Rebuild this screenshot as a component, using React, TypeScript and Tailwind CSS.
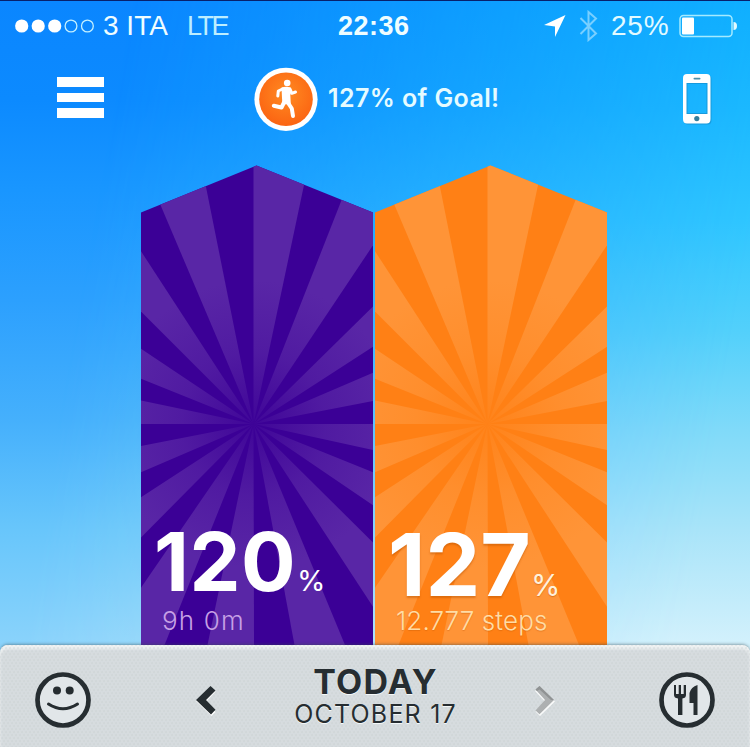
import type { ReactNode } from 'react'

interface BarProps {
  id: string
  base: string
  ray: string
  children: ReactNode
}

// Each row is the two outer points of a light ray, relative to the centre of the burst
const RAYS = [
  [0, -258, 50.5, -239],
  [88.5, -225, 119, -178],
  [119, -117, 119, -77],
  [119, -51, 119, -23],
  [119, 0, 119, 26],
  [119, 48, 119, 81],
  [119, 118, 119, 182],
  [91.5, 221, 41, 221],
  [0.5, 221, -46, 221],
  [-89, 221, -112, 163],
  [-112, 113, -112, 73],
  [-112, 48, -112, 22],
  [-112, 0, -112, -23.5],
  [-112, -45, -112, -75],
  [-112, -112, -112, -172],
  [-93, -219, -47.5, -237],
]

function SunburstBar({ id, base, ray, children }: BarProps) {
  return (
    <section className="relative h-[480px] w-[232px]">
      <svg className="absolute inset-0" width="232" height="480" viewBox="0 0 232 480">
        <defs>
          <clipPath id={`${id}-clip`}>
            <path d="M0 47.5L115.5 0.5L232 47.5V480H0Z" />
          </clipPath>
          <radialGradient id={`${id}-fade`} gradientUnits="userSpaceOnUse" cx="112.5" cy="259" r="240">
            <stop offset="0" stopColor={ray} stopOpacity="0.15" />
            <stop offset="0.3" stopColor={ray} stopOpacity="0.7" />
            <stop offset="0.6" stopColor={ray} />
          </radialGradient>
        </defs>
        <g clipPath={`url(#${id}-clip)`}>
          <rect width="232" height="480" fill={base} />
          {RAYS.map(([x1, y1, x2, y2], i) => (
            <path
              key={i}
              fill={`url(#${id}-fade)`}
              d={`M112.5 259L${112.5 + x1 * 2} ${259 + y1 * 2}L${112.5 + x2 * 2} ${259 + y2 * 2}Z`}
            />
          ))}
        </g>
      </svg>
      <div className="relative">{children}</div>
    </section>
  )
}

function StatusBar() {
  return (
    <div className="flex h-[50px] items-center border-t border-[#07206b] pt-px pl-[15px] text-[28px] leading-none">
      <svg width="80" height="14" viewBox="0 0 80 14" fill="#fff">
        <circle cx="6.7" cy="7" r="6.6" />
        <circle cx="23.2" cy="7" r="6.6" />
        <circle cx="39.7" cy="7" r="6.6" />
        <circle cx="56" cy="7" r="5.9" fill="none" stroke="#c4f0ff" strokeWidth="1.3" />
        <circle cx="72.4" cy="7" r="5.9" fill="none" stroke="#c4f0ff" strokeWidth="1.3" />
      </svg>
      <span className="ml-[8px] w-[66px] whitespace-nowrap text-[#effdff]">3 ITA</span>
      <span className="ml-[18px] w-[46px] text-[27px] tracking-[-2.5px] text-[#bdeeff]">LTE</span>
      <span className="ml-[105px] w-[75px] text-[27px] font-bold tracking-[0.5px] text-[#effdff]">22:36</span>
      <svg className="ml-[131px]" width="22" height="22" viewBox="0 0 22 22">
        <path d="M0 10L21.5 0L11 22V11.5Z" fill="#fff" />
      </svg>
      <svg className="ml-[13px]" width="20" height="32" viewBox="0 0 20 32">
        <path d="M1.5 8L17 23.5L9.5 30V2L17 8.5L1.5 24" fill="none" stroke="#79cfff" strokeWidth="2" />
      </svg>
      <span className="ml-[12px] w-[60px] tracking-[0.8px] text-[#e3faff]">25%</span>
      <svg className="ml-[8px]" width="59" height="24" viewBox="0 0 59 24">
        <rect x="1" y="1.5" width="52" height="21" rx="3.5" fill="none" stroke="#a5eaff" strokeWidth="1.5" />
        <rect x="3" y="3.5" width="12" height="17" rx="1" fill="#fff" />
        <path d="M54.5 8Q58 8 58 12Q58 16 54.5 16Z" fill="#e0faff" />
      </svg>
    </div>
  )
}

function GoalHeader() {
  return (
    <header className="flex h-[115px] pt-[17px] pl-[57px] font-['Inter',sans-serif]">
      <div className="flex w-[47px] flex-col gap-[6px] pt-[10px]">
        <div className="h-[9.5px] bg-white" />
        <div className="h-[9.5px] bg-white" />
        <div className="h-[9.5px] bg-white" />
      </div>
      <svg className="ml-[150px]" width="64" height="64" viewBox="0 0 64 64">
        <defs>
          <radialGradient id="badge" cx="50%" cy="40%" r="60%">
            <stop offset="0" stopColor="#ff8b22" />
            <stop offset="1" stopColor="#fb6412" />
          </radialGradient>
        </defs>
        <circle cx="32" cy="32.3" r="31.6" fill="#fff" />
        <circle cx="32" cy="32.3" r="26.8" fill="url(#badge)" />
        <circle cx="33.2" cy="16" r="3.3" fill="#fff" />
        <g fill="none" stroke="#fff" strokeLinecap="round" strokeLinejoin="round">
          <path d="M28.5 22L24.3 24L23.8 29M36 22L37.8 26.3L41.5 25" strokeWidth="3" />
          <path d="M30.5 34.5L27.5 40.5L19.8 38.8M33.5 35L37.8 41.5L39 49" strokeWidth="4" />
        </g>
        <path d="M27.5 20.5Q32 19.2 36.5 20.5Q38 24 36.3 28L36.8 37L28.5 37.5L28 31Z" fill="#fff" />
      </svg>
      <div className="ml-[10px] w-[172px] pt-[15px] text-[25px] leading-[32px] font-semibold tracking-[0.4px] whitespace-nowrap text-[#e5fbff]">
        127% of Goal!
      </div>
      <svg className="mt-[6px] ml-[183px]" width="29" height="52" viewBox="0 0 29 52">
        <g fillRule="evenodd">
          <path
            fill="#1689c6"
            opacity="0.6"
            d="M5 2H24.5Q28.5 2 28.5 6V47Q28.5 51.5 24.5 51.5H5Q1 51.5 1 47V6Q1 2 5 2ZM4.5 11V40H23.5V11Z"
          />
          <path
            fill="#fff"
            d="M4 1H23.5Q27.5 1 27.5 5V46Q27.5 50.5 23.5 50.5H4Q0 50.5 0 46V5Q0 1 4 1ZM3.5 10V41H24.5V10Z"
          />
        </g>
        <rect x="10.5" y="4.7" width="7" height="1.8" rx="0.9" fill="#4c8fa9" />
        <circle cx="13.8" cy="45.6" r="2.6" fill="#357f9e" />
      </svg>
    </header>
  )
}

function Footer() {
  return (
    <footer className="relative h-[102px] rounded-t-[8px] bg-[#dadfe2] font-['Inter',sans-serif] text-[#262d31] shadow-[0_-1px_3px_rgba(50,70,80,0.45),inset_0_4px_3px_#f8fafa]">
      <div className="flex h-full rounded-t-[8px] bg-[radial-gradient(circle,#c4cbce66_20%,transparent_60%),radial-gradient(circle,#c4cbce66_20%,transparent_60%)] bg-[size:4px_6px] bg-[position:0_0,2px_3px] pl-[35px]">
        <svg className="mt-[27px]" width="56" height="56" viewBox="0 0 56 56">
          <circle cx="28" cy="28" r="25.5" fill="#e1e6e9" stroke="#262d31" strokeWidth="4.7" />
          <circle cx="22" cy="18.5" r="4" fill="#262d31" />
          <circle cx="34.7" cy="18.5" r="4" fill="#262d31" />
          <path d="M13.5 32Q28 41.5 42.5 32" fill="none" stroke="#262d31" strokeWidth="3" strokeLinecap="round" />
        </svg>
        <svg className="mt-[40px] ml-[104px]" width="22" height="32" viewBox="0 0 22 32">
          <path d="M1 16L15.5 3L20.5 6.5L11.5 16.5L20.5 27L16.5 31Z" fill="#fff" />
          <path d="M1 15L15.5 1L20.5 5.5L11 15L20.5 24.8L16 29.5Z" fill="#262d31" />
        </svg>
        <div className="mt-[19px] ml-[76px] w-[165px] text-center whitespace-nowrap [text-shadow:0_1px_0_#f4f8f8]">
          <div className="text-[34px] leading-[36px] font-bold tracking-[1.2px]">TODAY</div>
          <div className="text-[25px] leading-[28px] tracking-[1.2px]">OCTOBER 17</div>
        </div>
        <svg className="mt-[40px] ml-[76px]" width="22" height="32" viewBox="0 0 22 32">
          <path d="M21 16.5L6 31L1.5 26.5L11 16.5L1 6L6 2Z" fill="#f9fafa" />
          <path d="M20 15L5.5 29.3L1.5 25.5L11 15L1.5 4.5L5.5 1Z" fill="#adb0b1" />
          <path d="M1.5 4.5L5.5 1L20 15H17L5.5 4.5L3 6Z" fill="#909394" />
        </svg>
        <svg className="mt-[27px] ml-[103px]" width="56" height="56" viewBox="0 0 56 56">
          <circle cx="28" cy="28" r="25.5" fill="#e1e6e9" stroke="#262d31" strokeWidth="4.7" />
          <path
            d="M15 13H17V22H19.7V13H22V22H24.7V13H27V23Q27 26 23.4 26.5V43H19V26.5Q15 26 15 23ZM38.5 43H34.5V31H30.5V21Q32 15 38.5 13Z"
            fill="#262d31"
          />
        </svg>
      </div>
    </footer>
  )
}

export default function App() {
  return (
    <main className="relative h-[747px] w-[750px] overflow-hidden bg-[linear-gradient(180deg,#0a86ff_0px,#0c8aff_100px,#1996ff_190px,#2ca0fe_300px,#45b0fc_420px,#68c6fb_530px,#8ad3fb_645px)] font-['Liberation_Sans',sans-serif]">
      <div className="absolute inset-0 bg-[linear-gradient(180deg,#10b2ff_0px,#1cbaff_110px,#2fc6ff_220px,#52d0fb_330px,#80daf9_430px,#a9e4f9_530px,#d3f1fc_645px)] [mask-image:linear-gradient(100deg,transparent_15%,black_90%)]" />
      <div className="relative">
        <StatusBar />
        <GoalHeader />
        <div className="flex h-[480px] gap-[2px] pl-[141px] font-['Inter',sans-serif]">
          <SunburstBar id="sleep" base="#3b0096" ray="#5926a6">
            <div className="flex h-[435px] items-end pl-[13px] text-white">
              <span className="w-[143px] text-[81px] leading-[76px] font-bold tracking-[0.5px]">120</span>
              <span className="text-[29px] leading-[38px]">%</span>
            </div>
            <div className="pl-[21px] text-[26px] leading-[42px] font-light tracking-[1.2px] text-[#c6a0e5]">9h 0m</div>
          </SunburstBar>
          <SunburstBar id="steps" base="#ff8015" ray="#ff9437">
            <div className="flex h-[435px] items-end pl-[13px] text-white">
              <span className="w-[143px] text-[87px] leading-[70px] font-bold [text-shadow:0_2px_2px_#b6510077]">127</span>
              <span className="text-[30px] leading-[30px] text-[#fff1dc] [text-shadow:0_1px_1px_#b6510077]">%</span>
            </div>
            <div className="pl-[21px] text-[26px] leading-[42px] font-light tracking-[0.1px] text-[#ffdca5] [text-shadow:0_1px_1px_#b6510055]">
              12.777 steps
            </div>
          </SunburstBar>
        </div>
        <Footer />
      </div>
    </main>
  )
}
